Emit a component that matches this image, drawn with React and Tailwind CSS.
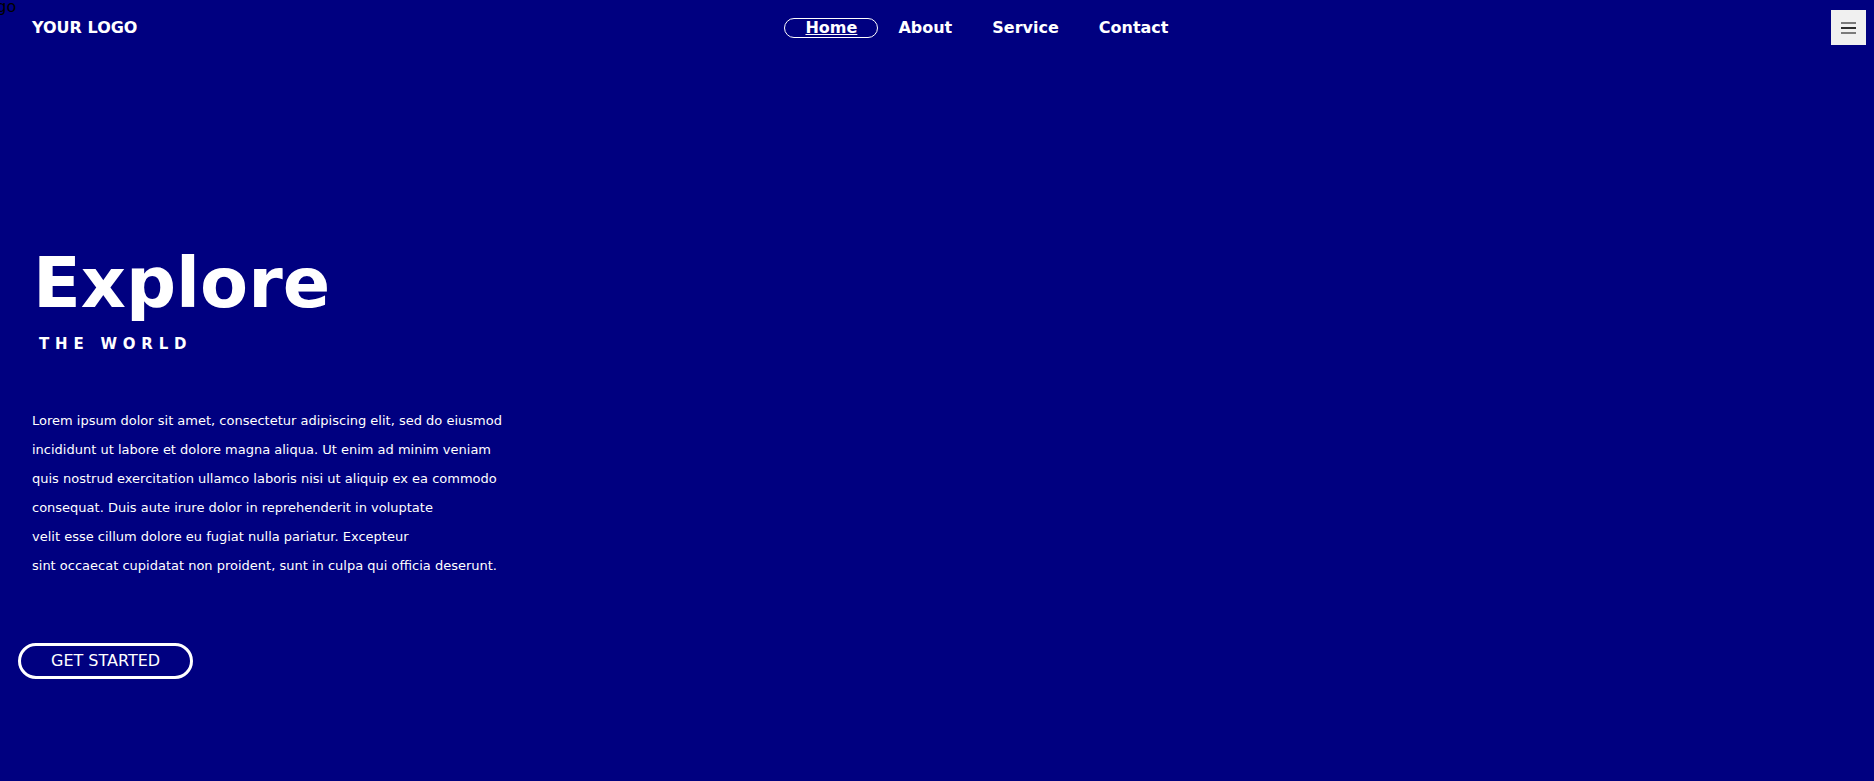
const links = ['Home', 'About', 'Service', 'Contact'];

export default function App() {
  return (
    <div className="relative h-[781px] overflow-hidden bg-[#000080] text-white font-['DejaVu_Sans',Verdana,sans-serif]">
      <span className="absolute left-[-18px] top-[-3px] text-[16px] leading-[19px] text-black">logo</span>

      <header className="flex h-[55px] items-center pl-[32px] pr-[8px]">
        <div className="text-[16px] font-bold leading-[19px]">YOUR LOGO</div>
        <nav className="ml-[647px] flex items-center">
          {links.map((l, i) => (
            <a
              key={l}
              href="#"
              className={
                i === 0
                  ? 'rounded-full border border-white px-[20px] text-[16px] font-bold leading-[18px] underline'
                  : 'rounded-full border border-transparent px-[19px] text-[16px] font-bold leading-[18px]'
              }
            >
              {l}
            </a>
          ))}
        </nav>
        <button
          type="button"
          className="ml-auto flex h-[35px] w-[35px] flex-col items-center justify-center gap-[3px] bg-[#f0f0f0]"
        >
          <span className="h-[2px] w-[15px] bg-[#7a7a7a]" />
          <span className="h-[2px] w-[15px] bg-[#2e2e2e]" />
          <span className="h-[2px] w-[15px] bg-[#7a7a7a]" />
        </button>
      </header>

      <section className="pl-[18px]">
        <h1 className="ml-[15px] mt-[188px] text-[70px] font-bold leading-[81px]">Explore</h1>
        <p className="ml-[21px] mt-[11px] text-[15px] font-bold uppercase leading-[18px] tracking-[5.8px]">The World</p>
        <p className="ml-[14px] mt-[53px] text-[13px] leading-[29px]">
          Lorem ipsum dolor sit amet, consectetur adipiscing elit, sed do eiusmod
          <br />
          incididunt ut labore et dolore magna aliqua. Ut enim ad minim veniam
          <br />
          quis nostrud exercitation ullamco laboris nisi ut aliquip ex ea commodo
          <br />
          consequat. Duis aute irure dolor in reprehenderit in voluptate
          <br />
          velit esse cillum dolore eu fugiat nulla pariatur. Excepteur
          <br />
          sint occaecat cupidatat non proident, sunt in culpa qui officia deserunt.
        </p>
        <button
          type="button"
          className="mt-[63px] rounded-full border-[3px] border-white px-[30px] py-[5px] text-[16px] leading-[20px] text-white"
        >
          GET STARTED
        </button>
      </section>
    </div>
  );
}
